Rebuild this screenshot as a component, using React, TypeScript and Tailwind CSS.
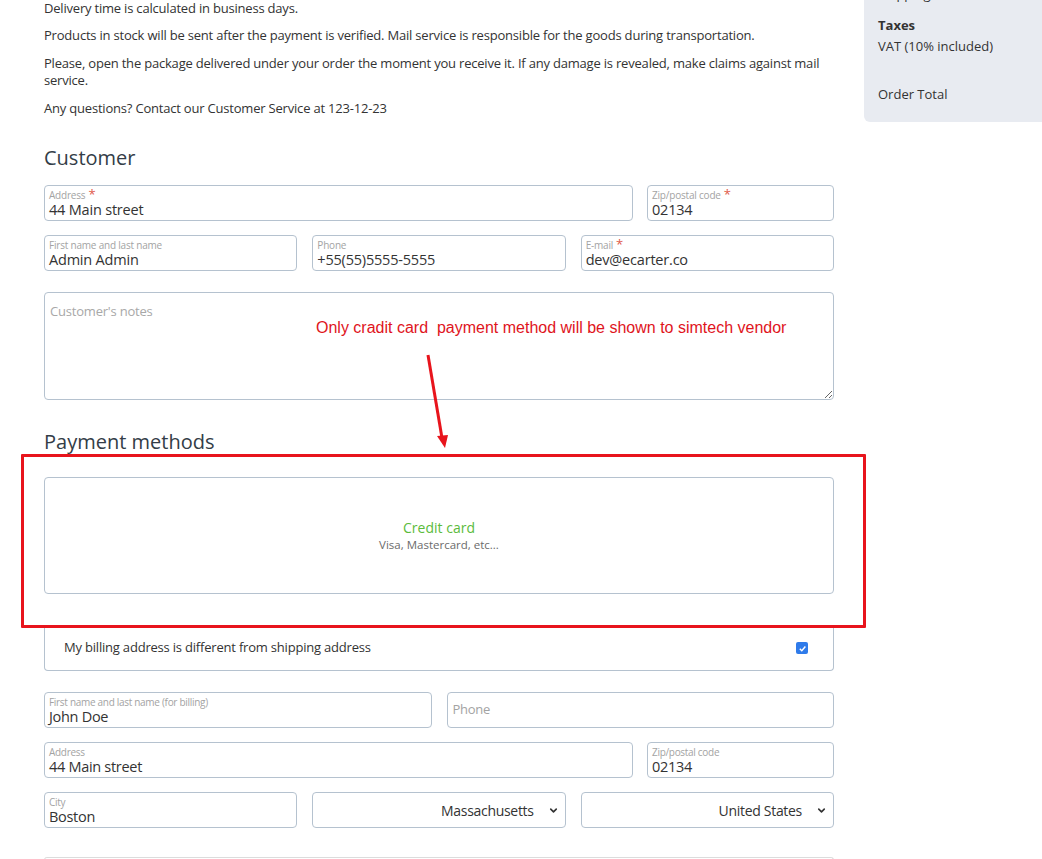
import { ChevronDown } from 'lucide-react';

function Field({ label, value, required, className = '' }: { label?: string; value?: string; required?: boolean; className?: string }) {
  return (
    <div className={`h-[36px] border border-[#b5c2cf] rounded-[4px] px-[4px] flex flex-col justify-center bg-white ${className}`}>
      {value !== undefined ? (
        <>
          <div className="text-[10px] leading-[12px] text-[#a3a3a3]">
            {label}
            {required && <span className="text-[#e05a4a] text-[13px] leading-[10px] ml-[3px]">*</span>}
          </div>
          <div className="text-[14.5px] leading-[17px] text-[#333]">{value}</div>
        </>
      ) : (
        <div className="text-[13px] text-[#a3a3a3] pl-[1px]">{label}</div>
      )}
    </div>
  );
}

function SelectBox({ value }: { value: string }) {
  return (
    <div className="h-[36px] border border-[#b5c2cf] rounded-[4px] flex items-center justify-end pr-[6px] gap-[14px] bg-white">
      <span className="text-[14px] text-[#333]">{value}</span>
      <ChevronDown size={11} strokeWidth={3.5} className="text-[#333]" />
    </div>
  );
}

export default function App() {
  return (
    <div className="w-[1042px] h-[859px] overflow-hidden bg-white relative tracking-[-0.2px]" style={{ fontFamily: '"Open Sans", "Noto Sans", sans-serif' }}>
      <div className="flex gap-[30px]">
        <div className="w-[834px] pl-[44px] shrink-0">
          {/* order notes */}
          <div className="text-[13px] leading-[17px] text-[#333] flex flex-col gap-[11px]">
            <p>Delivery time is calculated in business days.</p>
            <p className="-mt-[1px]">Products in stock will be sent after the payment is verified. Mail service is responsible for the goods during transportation.</p>
            <p>Please, open the package delivered under your order the moment you receive it. If any damage is revealed, make claims against mail service.</p>
            <p>Any questions? Contact our Customer Service at 123-12-23</p>
          </div>

          <h2 className="text-[20px] leading-[28px] text-[#333d47] mt-[27px] tracking-normal">Customer</h2>

          <div className="mt-[13px] flex flex-col gap-[14px]">
            <div className="flex gap-[14px]">
              <Field label="Address" value="44 Main street" required className="flex-1" />
              <Field label="Zip/postal code" value="02134" required className="w-[187px]" />
            </div>
            <div className="grid grid-cols-3 gap-[15px]">
              <Field label="First name and last name" value="Admin Admin" />
              <Field label="Phone" value="+55(55)5555-5555" />
              <Field label="E-mail" value="dev@ecarter.co" required />
            </div>
          </div>

          <div className="relative mt-[21px]">
            <textarea
              readOnly
              placeholder="Customer's notes"
              className="block w-full h-[108px] border border-[#b5c2cf] rounded-[4px] px-[5px] py-[9px] text-[13px] text-[#333] placeholder:text-[#a8a8a8] outline-none"
            />
            {/* annotation */}
            <div className="absolute left-[272px] top-[24px] text-[16px] tracking-normal text-[#e0141c] whitespace-pre" style={{ fontFamily: '"Liberation Sans", Arial, sans-serif' }}>
              Only cradit card  payment method will be shown to simtech vendor
            </div>
            <svg className="absolute left-[374px] top-[60px] overflow-visible" width="30" height="100" viewBox="0 0 30 100">
              <line x1="10" y1="3" x2="24" y2="86" stroke="#e8141c" strokeWidth="3" />
              <polygon points="19,84 30,83 27,96" fill="#e8141c" />
            </svg>
          </div>

          <h2 className="text-[20px] leading-[28px] text-[#333d47] mt-[28px] tracking-normal">Payment methods</h2>

          <div className="relative mt-[21px]">
            <div className="h-[117px] border border-[#b5c2cf] rounded-[4px] flex flex-col items-center justify-center tracking-normal">
              <div className="text-[14px] leading-[18px] text-[#5bbb3c]">Credit card</div>
              <div className="text-[11.5px] leading-[16px] text-[#6b6b6b]">Visa, Mastercard, etc...</div>
            </div>
            {/* red highlight box */}
            <div className="absolute -left-[23px] -right-[32px] -top-[23px] -bottom-[34px] border-[3px] border-[#e8141c] rounded-[1px] pointer-events-none z-10" />
          </div>

          <div className="mt-[32px] h-[45px] border border-[#b5c2cf] border-t-0 rounded-b-[4px] flex items-center justify-between pl-[19px] pr-[25px]">
            <span className="text-[13px] text-[#333]">My billing address is different from shipping address</span>
            <span className="w-[12px] h-[12px] rounded-[2px] bg-[#2f7bea] flex items-center justify-center">
              <svg width="9" height="9" viewBox="0 0 10 10">
                <path d="M2 5.3 L4.2 7.4 L8.2 2.8" stroke="white" strokeWidth="1.6" fill="none" />
              </svg>
            </span>
          </div>

          <div className="mt-[21px] flex flex-col gap-[14px] tracking-[-0.3px]">
            <div className="grid grid-cols-2 gap-[15px]">
              <Field label="First name and last name (for billing)" value="John Doe" />
              <Field label="Phone" />
            </div>
            <div className="flex gap-[14px]">
              <Field label="Address" value="44 Main street" className="flex-1" />
              <Field label="Zip/postal code" value="02134" className="w-[187px]" />
            </div>
            <div className="grid grid-cols-3 gap-[15px]">
              <Field label="City" value="Boston" />
              <SelectBox value="Massachusetts" />
              <SelectBox value="United States" />
            </div>
          </div>

          <div className="mt-[29px] h-[4px] border-t border-x border-[#dcdcdc] rounded-t-[3px]" />
        </div>

        {/* order summary sidebar */}
        <div className="self-start flex-1 h-[136px] bg-[#e8ebf1] rounded-bl-[6px] pl-[14px] -mt-[14px] text-[13px] text-[#333] tracking-normal">
          <div className="leading-[17px]">Shipping</div>
          <div className="font-bold leading-[17px] mt-[14px]">Taxes</div>
          <div className="leading-[17px] mt-[4px]">VAT (10% included)</div>
          <div className="leading-[17px] mt-[31px]">Order Total</div>
        </div>
      </div>
    </div>
  );
}
